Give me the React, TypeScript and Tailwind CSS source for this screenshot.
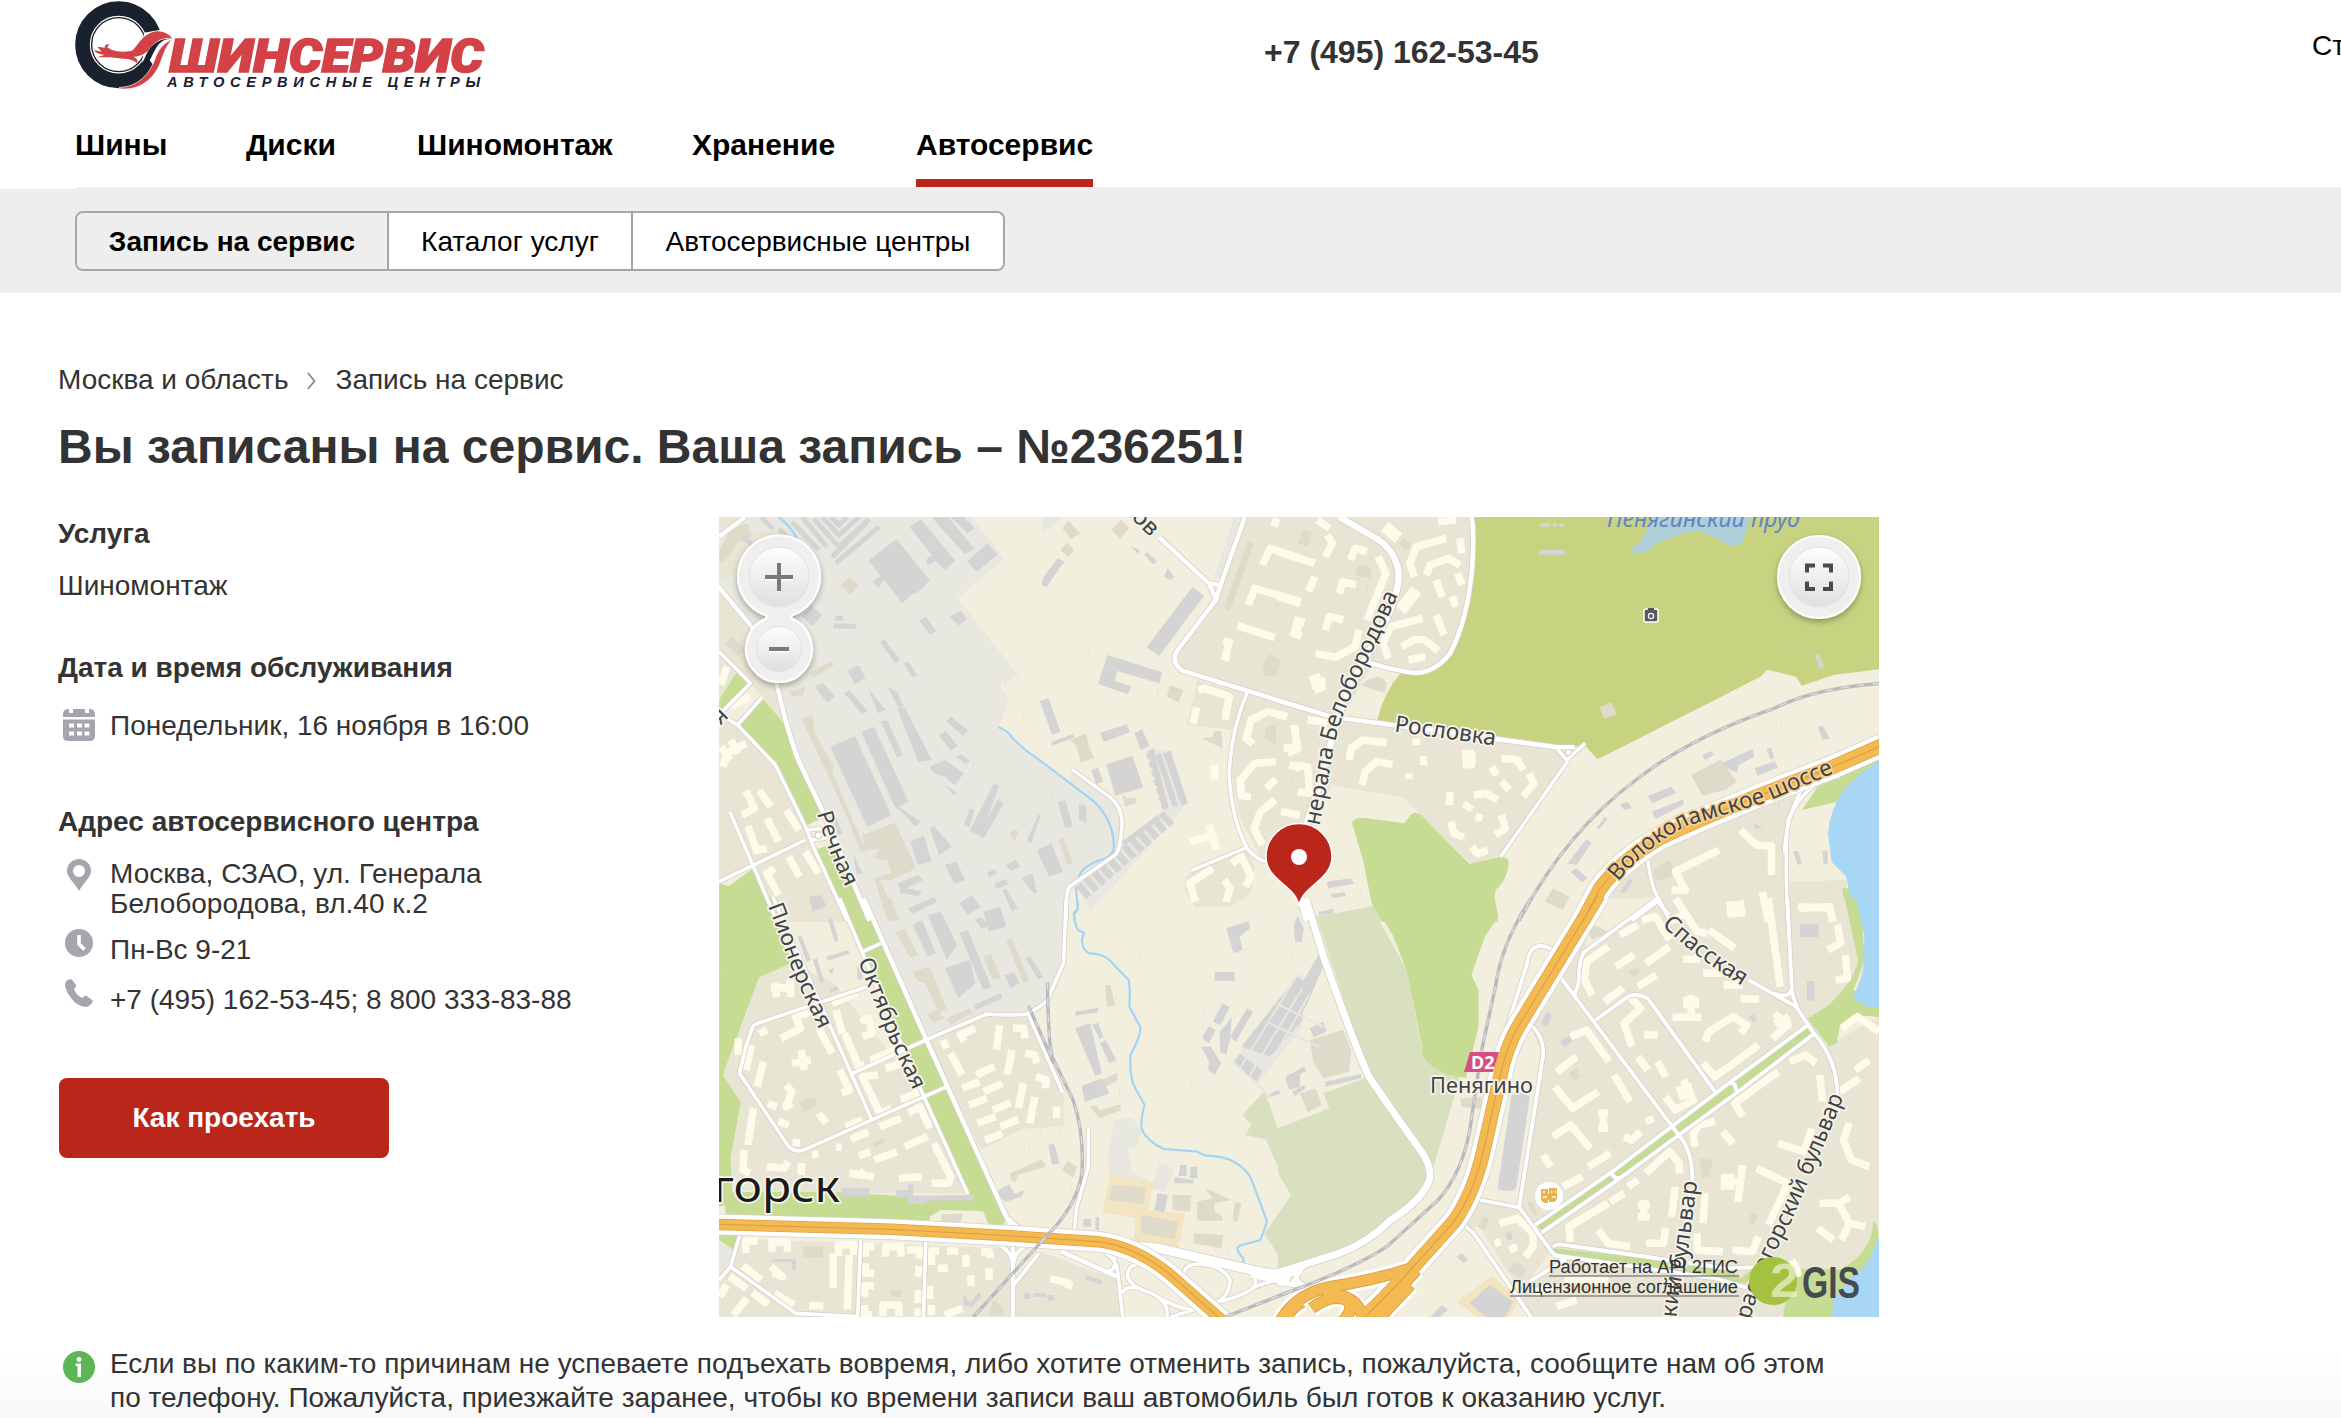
import React from "react";

/* ------------------------------------------------------------------ */
/* Map data: every tile has its own local grid                          */
/* ------------------------------------------------------------------ */

type TileId = "nw" | "ne" | "sw" | "se";

const tileTransform: Record<TileId, string> = {
  nw: "translate(-19 -17) scale(0.38265 0.33333)",
  ne: "translate(561 -17) scale(0.39541 0.33333)",
  sw: "translate(-19 383) scale(0.38265 0.33333)",
  se: "translate(561 383) scale(0.39541 0.33333)",
};

type Shape = { t: TileId; d: string; c: string };
type Line = { t: TileId; d: string; w: number };

const BLOCK = "#e8e5d4";
const INDUSTRY = "#e8e8e1";
const GREEN = "#c5dc92";
const PALE = "#d9e0c0";
const WATER = "#a8d6f5";

const areas: Shape[] = [
  { t: "nw", c: INDUSTRY, d: "M50 51H708L795 175L673 294L833 528L782 553L806 607L780 682L960 845L975 812L1085 905L1103 970L1085 1060L960 1165L955 1265H443L305 900L255 760L200 550L135 380L50 262Z" },
  { t: "nw", c: BLOCK, d: "M50 51H118L50 110Z M50 140L120 90L215 100L200 150L60 240L50 235Z" },
  { t: "nw", c: BLOCK, d: "M50 262L135 380L200 550L235 690L165 595L132 550L50 455Z" },
  { t: "nw", c: BLOCK, d: "M50 640L98 675L197 795L275 978L303 1050L385 1265H200L140 1105L50 1145Z M50 455L132 550L98 513L50 600Z" },
  { t: "nw", c: BLOCK, d: "M1425 51H1570V625L1250 512L1238 470L1350 300Z" },
  { t: "nw", c: BLOCK, d: "M1300 540L1570 628V1085H1470L1410 950L1385 800L1400 690L1272 675Z" },
  { t: "nw", c: BLOCK, d: "M1270 1130L1300 1095L1430 1045L1450 1100L1440 1180L1390 1218L1295 1222L1266 1170Z" },
  { t: "nw", c: INDUSTRY, d: "M895 51H945L895 100Z M1395 51H1420L1360 235H1343Z M1180 745L1228 752L1272 912L1080 1160L1020 1235L985 1160L1100 1050L1215 930Z" },
  { t: "ne", c: BLOCK, d: "M-5 51H485L488 200Q480 350 420 460Q380 530 305 518L230 495L160 650L-5 603Z" },
  { t: "ne", c: BLOCK, d: "M-5 610L160 655L725 745L720 780L558 1070L485 1092L310 892L130 855L80 970H-5Z" },
  { t: "ne", c: "#c8d382", d: "M485 51H1515V508L1400 525L1320 557L1305 530L1232 509L1215 530L850 750L803 778L770 735L745 740L246 660Q262 580 305 520Q380 535 420 460Q480 350 488 200Z" },
  { t: "ne", c: "#aecfd8", d: "M940 51Q920 130 888 145Q886 165 930 155Q960 118 985 118Q1030 90 1065 97Q1100 110 1130 133Q1160 145 1172 120L1190 51Z" },
  { t: "ne", c: GREEN, d: "M182 968Q186 952 215 954L315 970L330 945Q340 933 355 943L480 1092L560 1070Q580 1072 578 1092Q575 1140 545 1170L540 1215L552 1265H257L232 1210L210 1080Z" },
  { t: "ne", c: PALE, d: "M90 1252L235 1218L260 1265H90Z" },
  { t: "ne", c: BLOCK, d: "M750 1265L860 1130Q1000 1010 1310 870Q1272 970 1283 1265Z M1283 1145L1432 1140L1440 1265H1283Z" },
  { t: "ne", c: GREEN, d: "M1515 775V800Q1440 850 1410 905L1320 930L1360 860Z M1422 1165L1438 1165L1458 1265H1435Z" },
  { t: "ne", c: WATER, d: "M1515 785Q1395 860 1386 1000L1395 1085L1432 1130L1440 1180L1458 1265H1515Z" },

  { t: "sw", c: GREEN, d: "M50 -10H185L240 190L155 232L110 370L60 525L107 607L80 775L85 880L68 948H50Z" },
  { t: "nw", c: GREEN, d: "M50 600L98 513L132 550L62 625L50 628Z M98 675L162 592L212 660L232 700L255 780L320 930L318 955L275 978L197 795Z M300 1050L345 1032L445 1262H385Z M50 1150L75 1158L140 1105L202 1262H50Z" },
  { t: "sw", c: BLOCK, d: "M350 250L590 590L700 880L370 880L85 872L80 775L107 607L60 525L110 370L155 232L240 190Z" },
  { t: "sw", c: GREEN, d: "M360 -5H428L590 415L802 950L790 982L68 948L60 876L350 876L715 900L700 880L585 590Z" },
  { t: "sw", c: "#f2efde", d: "M600 972V950L628 930L740 933L755 978Z M50 920L65 915L68 948H50Z" },
  { t: "sw", c: INDUSTRY, d: "M428 -5H955L950 190L912 295L855 342L750 345L590 415Z" },
  { t: "sw", c: BLOCK, d: "M595 422L750 345H855L950 578V678L840 687L735 750Z" },
  { t: "sw", c: BLOCK, d: "M50 1015L815 1045V1251H50Z M825 1160L890 1055L1090 1140L1105 1251H825Z" },
  { t: "sw", c: INDUSTRY, d: "M1065 760L1085 660L1130 652L1155 697L1140 740L1118 750L1130 820L1185 848L1200 790L1240 805L1215 875L1070 825Z M1500 330L1555 225H1575V380L1458 550L1390 490Z M50 1020L85 1045L80 1100L50 1140Z" },
  { t: "sw", c: "#f3e4c2", d: "M1072 822L1185 850L1172 930L1267 940L1250 1047L1133 1020L1138 955L1052 935Z" },
  { t: "sw", c: PALE, d: "M1475 572L1510 685L1575 662V1102L1535 1105L1475 1003L1545 885L1478 718L1425 705L1440 675L1418 645Z" },
  { t: "sw", c: GREEN, d: "M50 1005L105 1003L88 1050L50 1020Z" },
  { t: "se", c: PALE, d: "M92 50L232 20L320 210L360 450L375 490L455 530L385 815Q345 730 230 550Z M215 535L110 580L125 625L-5 685V820L28 885L-5 955V1105L180 1040L360 890L385 830L350 740Z" },
  { t: "se", c: GREEN, d: "M228 -5H543L552 50L518 110L484 225L502 270V380L470 535L420 522Q355 490 360 440L320 210L285 105Z" },
  { t: "se", c: BLOCK, d: "M820 -5H1440L1480 200L1440 290L1340 350L1380 440L1515 350V1000L1400 1150L1260 1251H640L470 980L505 900L605 920L660 450L630 370L700 220Z" },
  { t: "se", c: "#f2efde", d: "M475 990L605 920L690 1060L720 1080L600 1170Z M445 1130H600L630 1251H445Z M735 -5H955L765 170L790 60Z" },
  { t: "se", c: BLOCK, d: "M505 905L605 925L685 1055L630 1140H590L515 1000Z" },
  { t: "se", c: "#f3e4c2", d: "M535 1128L607 1195L580 1251H500L447 1205Z" },
  { t: "se", c: GREEN, d: "M1428 -5L1462 180Q1455 240 1385 318L1335 355L1388 440L1408 430L1415 385Q1450 335 1515 352V310L1450 270L1478 180L1470 -5Z" },
  { t: "se", c: WATER, d: "M1455 -5H1515V322Q1470 325 1448 290Q1485 210 1475 160L1478 110L1470 60Z M1515 1010Q1485 1090 1450 1120L1395 1195V1251H1515Z" },
  { t: "se", c: GREEN, d: "M1500 965Q1515 970 1512 1015Q1490 1100 1450 1125L1400 1195L1395 1251H1272L1280 1190L1160 1140L1195 1108H1420Q1500 1050 1500 965Z" },
  { t: "se", c: GREEN, d: "M1330 383L1347 402L1160 572L1000 705L860 832L662 992L648 975L840 818L1130 550Z M690 1045L1130 1100L1180 1150L940 1110L700 1068Z" },
];

const greyBuildings: Shape[] = [
  { t: "nw", c: "", d: "M440 182L513 117L602 243L570 275L552 285L528 309L480 238L467 266L452 244L472 228Z M548 82L577 57L667 182L640 209L615 182L596 198L590 180L606 165Z M605 51H648L717 146L692 163Z M655 51H690L718 85L700 100Z M698 183L752 130L777 165L723 215Z" },
  { t: "nw", c: "", d: "M1040 552L1065 465L1208 517L1200 550L1090 513L1085 543L1127 560L1118 583Z M1167 442L1287 260L1317 287L1200 468Z M340 740L405 708L500 945L437 980Z M422 697L455 680L545 905L520 920L577 965L562 980L540 950L508 918Z" },
  { t: "nw", c: "", d: "M472 662L490 662L530 765L515 773Z M490 560L515 575L532 620L518 622Z M515 625L535 622L606 780L570 785Z M376 580L390 570L438 632L425 643Z M300 560L322 548L352 590L333 608Z M385 512L415 495L433 535L405 553Z M437 562L485 630L465 640Z M470 427L482 418L523 480L510 490Z M532 490L545 487L567 525L555 532Z" },
  { t: "nw", c: "", d: "M573 362L590 350L617 392L602 405Z M652 350L680 332L698 355L678 377Z M350 370L407 372V387L348 385Z M353 347H373V362H353Z M265 350L290 318L320 345L295 378Z M624 705L643 693L673 738L655 752Z M645 665L655 650L700 690L688 708Z M600 800L640 780L690 820L665 855L640 830L610 820Z M670 770L680 762L705 782L695 792Z" },
  { t: "nw", c: "", d: "M705 992L768 850L783 858L748 960L780 895L793 912L742 1015Z M690 975L705 925L717 930L705 982Z M549 1025L585 1007L605 1085L570 1095Z M600 985L612 978L658 1040L625 1065Z M640 1095L670 1085L693 1140L665 1152Z M880 1050L918 1030L948 1115L912 1130Z M517 1150L570 1125L583 1140L540 1165L580 1175L570 1188L525 1180Z M545 1225L613 1192L618 1205L552 1240Z M678 1210L712 1185L733 1222L700 1245Z" },
  { t: "nw", c: "", d: "M888 603L911 594L942 695L920 705Z M918 727L973 703L980 712L920 737Z M1046 698L1115 673L1123 697L1055 726Z M1062 793L1130 767L1158 862L1085 887Z M1135 700L1155 688L1175 738L1152 750Z M1023 810L1040 803L1054 845L1035 853Z M1210 760L1230 752L1275 910L1258 918Z M1190 765L1205 760L1250 918L1235 920Z M1170 752L1185 745L1225 925L1210 930Z" },
  { t: "nw", c: "", d: "M895 235L935 175L952 185L905 262L893 255Z M1125 138L1150 150L1145 162Z M1160 162L1170 158L1195 185L1183 193Z M1213 230L1222 205L1240 230L1230 240Z M935 905L955 900L975 980L955 985Z M990 912L1010 918V970L990 960Z M285 1190L315 1185L330 1215L300 1230Z M800 1095L825 1080L838 1100L812 1113Z M750 1118L770 1108L775 1122L755 1132Z M770 1150L800 1138L805 1152L775 1168Z" },
  { t: "nw", c: "", d: "M855 1020L885 943L890 948L865 1030Z M400 1060L420 1110L428 1120L410 1125Z M340 955L355 950L372 1000L360 1008Z M790 1170L800 1165L830 1225L815 1235Z M840 1135L870 1120L880 1180L868 1175Z M640 855L670 878L662 884Z" },
  { t: "ne", c: "", d: "M655 150H720V164H655Z M658 69H683V80H658Z M690 69H701V80H690Z M706 69H718V80H706Z M1117 790L1195 747L1200 770L1160 795L1155 818L1140 810Z M1200 805L1250 784L1260 802L1208 827Z M930 888L990 860L1002 878L942 910Z M940 935L1020 898V915L950 957Z M727 1090L775 1018L788 1028L750 1095Z M860 912L880 905L890 925L870 930Z" },
  { t: "ne", c: "", d: "M1353 465L1362 460L1377 500L1365 508Z M1068 765L1090 753L1097 765L1075 780Z M1230 745L1243 745L1250 775L1240 777Z M1360 682L1372 676L1390 715L1373 720Z M1195 970L1220 980L1205 990Z M1298 1055L1310 1052L1320 1090L1310 1095Z M1372 1052H1385V1092H1375Z M118 1145L180 1135L187 1152L122 1165Z M128 1182L163 1177L167 1188L132 1193Z M98 1235L135 1228V1240L100 1245Z M735 1115L750 1105L778 1135L765 1147Z M800 985L822 950L828 957L808 988Z M860 1175L885 1135L893 1142L872 1180Z" },
  { t: "sw", c: "", d: "M640 205L705 180L720 250L675 295Z M595 45L630 35L672 135L645 180Z M555 75L580 60L617 160L595 170Z M678 100L700 90L762 262L740 270Z M740 35L785 20L800 80L755 95Z M715 315L785 280L790 295L720 330Z M795 225L820 215L835 250L812 265Z M720 60L735 50L755 80L735 85Z M850 175L865 170L897 230L885 240Z M547 25L610 -5L620 5L558 40Z" },
  { t: "sw", c: "", d: "M285 -5H320L325 20L295 35Z M330 170L388 150L390 160L335 182Z M335 210L350 205L345 225Z M295 180L305 175L325 245L315 250Z M255 110L265 105L290 180L278 185Z M335 60L345 55L362 120L352 125Z M338 268L358 258L362 268L342 278Z M410 200L425 195V240L412 238Z" },
  { t: "sw", c: "", d: "M980 385L1020 370L1050 520L1033 527Z M1025 375L1040 368L1055 410L1045 418Z M1045 430L1060 420L1088 480L1070 490Z M998 558L1050 535L1070 580L1005 607Z M980 335L1040 323V337L982 347Z M1345 217H1397V243H1345Z M1375 85L1435 63L1437 85L1410 110L1418 150L1395 160Z M1310 440L1335 440L1362 490L1345 525L1328 510L1330 485Z M1340 365L1365 310L1385 322L1360 375Z M1312 415L1330 378L1347 390L1330 430Z M1358 395L1370 380L1390 350L1385 420L1375 465L1360 455Z M1385 410L1430 325L1445 335L1400 425Z" },
  { t: "sw", c: "", d: "M1395 490L1410 460L1470 512L1455 545Z M1415 440L1490 330L1560 230L1575 240V360L1490 470Z M780 870L808 853L823 882L850 870L840 890L800 905L785 895Z M513 870H543V853H557V887L715 885V902H592L590 912H545L543 893H513Z M370 863H442V890H370Z M1195 880L1223 885L1213 938L1188 930Z M1002 957H1022V980H1002Z M1033 952H1043V990H1033Z M687 1180L705 1210L730 1175L735 1190L710 1222L690 1215Z M847 1180H865V1197H847Z M870 1180H903V1190H870Z M908 1185H925V1202H908Z M1010 1125L1052 1142L1048 1155L1008 1138Z M190 1078H250V1110H240V1085H190Z M1255 795H1272V828H1250Z M1282 800H1300V835H1280Z M1240 832L1290 840V850H1240Z M910 735L925 730L940 790L920 795Z M1480 585L1515 570V582L1485 593Z M1530 535L1568 515V560L1540 570Z" },
  { t: "se", c: "", d: "M585 585Q608 570 632 590L598 860Q595 880 550 868Z M-5 430L50 260L100 160L118 175L70 310L35 385L-5 445Z M75 385L110 365L118 395L85 412Z M15 530L60 500L67 512L20 540Z M30 575L60 555L65 565L38 588Z M112 545L205 522V535L115 560Z M35 75L45 45L60 85L55 125H38Z M97 38L135 25V38L100 47Z M1315 72H1362V112H1315Z M1333 243H1352V302H1333Z M708 425L730 408L740 422L720 440Z M660 372L675 335L688 345L675 380Z M447 1070L460 1060L475 1080L465 1090Z M380 1251L410 1215L425 1230L405 1251Z M1185 350L1195 342L1207 358L1197 368Z M570 1000L585 995L587 1020H575Z M480 1210L530 1155L590 1205L570 1251H520Z" },
];

const beigeBuildings: Shape[] = [
  { t: "nw", c: "", d: "M367 257L390 230L415 255L393 285Z M285 520L345 482L350 495L295 533Z M265 655L295 645L300 700L350 800L345 815L425 1030L440 1050L420 1055L380 940Z M423 1005L510 968L565 1105L500 1140L470 1140L520 1262H490L455 1135L500 1120L490 1080L455 1075L470 1045L435 1050Z M1075 90L1100 60L1122 85L1098 115Z M947 85L962 62L993 100L970 118Z M942 150L960 127L978 150L962 170Z M968 720L1010 700L1015 735L1030 775L995 787L985 740Z M1228 555L1263 570L1250 608L1220 590Z M1430 125L1448 130L1385 332L1370 325Z M1310 715L1340 710L1345 693H1362L1365 745Z M235 575L275 560L270 585L240 590Z" },
  { t: "nw", c: "", d: "M80 90L125 70L135 110L100 125L60 190L50 180V150Z M65 430L85 410L120 450L100 470Z M1470 490L1490 462L1518 480L1505 530L1475 525Z M937 1020L950 1013L975 1090L960 1095Z M1105 882L1115 895L1138 893L1142 908L1110 920Z M810 1000L822 988L833 995L822 1025Z M1475 710L1480 680L1505 675V735Z" },
  { t: "ne", c: "", d: "M1040 825L1115 778L1155 845L1125 870L1068 887Z M808 622L838 607L852 642L820 657Z M45 130L60 88L80 95L70 140Z M190 225L200 195L232 205L228 235Z M205 555Q250 510 270 550L265 580Z M945 1110L985 1078L1003 1125L950 1145Z M670 1205L690 1165L732 1190L715 1230Z M300 130L315 115L330 140L318 155Z" },
  { t: "sw", c: "", d: "M555 215L600 200L645 325L625 340L640 355L610 370L595 345L620 330L590 250L570 245Z M510 95L535 85L570 165L550 175Z M645 355L705 325L712 340L655 375Z M800 120L815 115L860 240L845 250Z M740 170L760 160L785 235L765 240Z M480 -5H500L520 60L508 65Z M1050 540L1090 518L1092 540L1060 560Z M1018 620L1035 615L1045 630L1100 612V630L1045 655Z M1075 855L1165 862L1160 912L1070 900Z M1150 945L1250 965L1240 1018L1155 1000Z M1235 885L1285 885L1280 935L1235 930Z M1320 865L1390 900L1345 910V935L1365 950V962H1300L1298 905L1340 895Z" },
  { t: "sw", c: "", d: "M1290 1000L1368 1005L1362 1045L1290 1030Z M1398 905L1415 910L1405 965L1392 960Z M630 942H688L680 972H632Z M270 1040H322V1073H268Z M810 820L893 778L905 800L830 825L825 847L812 840Z M1058 255L1072 255L1085 315L1065 320Z M260 605L300 590L305 615L268 637Z M765 1200L795 1225L790 1245L755 1248Z M450 730L480 715V728L455 742Z M498 1170H527V1190H498Z M945 810L960 783L985 800L975 835Z" },
  { t: "se", c: "", d: "M75 420L160 390L180 450L175 515L110 535L85 490Z M50 580L90 565L105 615L70 637Z M455 595L510 590L515 630L460 620Z M1060 775L1095 780L1085 835L1070 830Z M500 980L515 948L530 958L515 992Z M730 520L750 505L760 530L745 545Z M625 910L638 905L650 940L642 948Z M780 100L795 75L830 95L790 120Z M575 1110L600 1085L625 1110L610 1135Z M880 215L900 203L912 215L895 233Z M1185 970L1190 940L1210 945L1200 975Z" },
];

const creamBuildings: Line[] = [
  { t: "nw", w: 7.5, d: "M1470 195L1490 145L1570 175 M1433 315L1450 265L1570 305 M1405 377L1502 413 M1368 422L1392 430M1382 430L1372 475M1362 468L1385 475 M1302 572L1320 565L1383 590L1372 660 M1298 622L1288 672 M1445 733L1428 715L1440 660L1485 635L1535 650 M1440 890L1415 888L1412 840L1450 790L1505 785 M1470 1035L1448 985L1465 935L1503 900 M1350 1050L1330 975M1280 1025L1330 1010 M1295 1205L1280 1150L1340 1105M1390 1090L1415 1070L1440 1130L1425 1160M1370 1140L1385 1165L1375 1205 M1500 80L1508 55 M1550 410L1562 360 M1525 745L1560 740L1555 680 M1480 865L1505 838 M1518 935L1568 945 M1345 795V838 M1540 795L1568 805" },
  { t: "nw", w: 7.5, d: "M78 620L130 590 M55 555L70 500 M60 800L70 760L120 730M80 720L100 760M55 740L80 780 M110 945L142 925L120 872 M155 872L185 920 M175 955L205 1025 M225 930L258 990 M125 978L148 1052L175 1045 M232 1070L260 1130 M275 1055L310 1120 M195 1105L175 1120L205 1185" },
  { t: "ne", w: 7.5, d: "M-5 155L88 190 M-5 290L52 310 M88 230L72 275 M120 105L132 130L115 170M95 60L125 85 M178 180L190 145L220 155 M150 280L158 245L192 255 M115 390L125 350L160 360 M248 170L268 220L220 360 M340 230L328 190L345 140L420 115 M370 225L380 195L425 175L455 195 M455 115L460 160 M275 475L260 430L280 380L360 355 M308 440L340 418L365 420L400 452 M325 480L368 470 M35 360L62 368M50 365L40 410M32 400L55 408 M90 460L140 472L190 440L200 390 M395 240L410 290 M435 290L445 320 M395 345L415 405 M450 220L460 255 M400 65L445 60" },
  { t: "ne", w: 12, d: "M265 80L300 115 M345 270L305 330 M85 525L105 575M80 550H115 M475 750L478 805M462 775H495" },
  { t: "ne", w: 7.5, d: "M-5 645L15 650M35 675L45 745L20 760 M175 780L180 745L210 720L270 728 M208 855L215 815L245 785L285 793 M70 660L110 665V700 M345 715V735 M363 768V795 M326 820V838 M25 795L70 800L75 880L45 875 M430 875L428 915 M465 910L485 930 M490 885L520 880L550 900 M495 950L512 955 M535 800L548 825 M560 775L600 780L615 810 M560 845L580 870 M630 820L642 850L615 890 M432 965L440 1000L465 1012 M485 1040L500 1062L525 1050 M560 945L570 985L545 1005 M1165 990L1205 1035L1243 1038V1125 M985 1265L1020 1245M990 1170L1025 1170L1000 1115L1110 1050 M1220 1175L1235 1265 M1315 1225L1390 1220L1398 1265" },
  { t: "sw", w: 7.5, d: "M185 262L240 265M200 290L195 250M235 240L238 290 M212 415L262 385L250 350L290 335 M155 402L175 390 M100 415V465 M135 435L120 510 M165 485L150 560 M310 385L345 460 M355 330L372 400 M378 400L415 500L430 495 M345 310L410 280 M420 365L440 355L450 400L425 410 M445 480L510 450 M365 510L390 570L370 580 M240 490L290 480M265 450L272 510 M225 555L240 575L225 620L240 610 M178 610L200 620 M465 525L425 530L470 640L500 625 M485 505L530 490 M310 640L330 670 M205 665L232 675 M140 625L125 735 M115 750L112 810L130 820 M175 800L220 805L230 785 M265 790V825 M242 728H262 M355 742H370 M293 763H310" },
  { t: "sw", w: 7.5, d: "M380 680L425 660 M395 718L440 695 M415 768L445 755 M455 780L515 755 M470 680L525 655 M535 740L595 710 M545 640L575 620L600 685 M612 730L655 830L650 850L605 850 M390 820L455 830M420 825L430 810 M520 835L580 830 M690 425L680 405L720 385 M635 420L645 445 M655 460L685 525 M722 525L770 500 M685 565L730 545 M742 575L790 550 M703 615L750 595 M765 630L812 608 M725 670L772 650 M785 680L832 658 M745 720L790 700 M783 375L775 450 M815 450L803 525 M845 550L832 625 M875 590L862 670 M818 385L845 385L850 415 M850 460L875 465L880 490 M878 530L905 540L903 565 M932 620V655 M525 600L575 575" },
  { t: "sw", w: 7.5, d: "M120 1060V1023H150 M188 1055V1027H228V1055 M362 1068V1035H402V1065 M455 1040H432V1070 M485 1070V1040H525V1070 M540 1050H575V1078 M625 1053H605V1095 M645 1053H675 M735 1055H757V1075 M348 1060V1165 M390 1065L385 1228 M432 1090V1120H455 M572 1098V1130 M455 1157H430V1190 M600 1158V1197 M570 1170V1210 M430 1215V1245H450 M478 1248V1215H520V1248 M570 1225V1248 M605 1245V1215 M112 1097L160 1140 M78 1130L122 1165 M137 1178L178 1213 M122 1195L88 1245 M185 1100L215 1130L190 1120 M195 1180L245 1215 M285 1217H322 M622 1105H648M635 1095V1115 M695 1065V1100 M755 1105V1140 M708 1125V1158 M640 1245L685 1225 M915 1135L965 1150L960 1165 M52 1190L70 1155" },
  { t: "se", w: 7.5, d: "M860 105L905 75 M915 60L950 50L985 120 M925 190L985 140 M850 200L895 165 M905 260L952 225 M820 305L868 265 M790 285L770 240L775 185L830 140 M1020 178H1062 M1070 220H1118 M1122 255H1170 M1165 297H1212 M1040 285V340M993 352H1065 M1235 -5L1265 260 M1000 -5L1055 95L1080 100M1085 90L1150 145 M885 290L912 325L870 370L890 440 M920 405H955 M905 470L930 510 M955 485L975 530 M1075 425L1085 395L1145 350L1180 375L1165 400 M1250 340L1285 375L1245 415 M1070 490L1100 530L1210 435 M735 410L775 390L832 485" },
  { t: "se", w: 7.5, d: "M700 515L750 470 M695 560L740 625L805 575 M845 525L885 605 M818 635V690M805 640H830M805 685H830 M665 765L685 800 M690 710L735 675L785 745 M780 800L835 760 M925 665L945 655 M870 710L890 720L912 695 M975 590L1000 630L1045 600L1020 540 M1050 740L1045 700L1060 675L1100 665 M1120 695L1145 730 M1260 730L1325 755L1345 685 M1290 485L1330 465L1355 490 M1365 525L1372 605 M1170 650L1150 610L1260 515 M1455 510L1490 480 M1415 575L1465 535 M1440 670L1425 720L1445 780L1490 800 M1420 385L1460 350L1515 395 M715 860L765 830 M735 1025L730 980L830 910 M835 905L870 880 M880 860L905 840 M925 820L985 755L1010 790V820 M920 900V960M905 915H935M905 950H935" },
  { t: "se", w: 7.5, d: "M805 990L830 1030L885 1040 M925 1030H970L975 985 M1000 860L990 950 M1075 880L1070 970 M1170 795L1158 905M1115 845H1165 M1205 805L1285 850L1235 975 M1055 1000V1050L1120 1055 M1210 1010L1195 1055L1145 1050 M1365 910H1415L1440 890M1415 915L1440 970L1480 980M1440 970L1420 1020 M1360 985L1400 1020 M1240 1125L1310 1120L1295 1080 M555 970L600 955L640 1000V1040L620 1070 M543 1030L558 1025 M580 1050L600 1040 M1310 20L1395 25 M1410 75L1418 130L1385 150 M1430 165L1435 235L1405 240 M640 1180L690 1160 M720 1140H830 M700 1220L750 1200" },
  { t: "se", w: 16, d: "M1040 290V325 M1130 30L1175 25M1150 5L1160 45 M1115 845H1150 M1265 350L1275 375 M1020 555L1030 595" },
];

/* Ordinary streets: grey casing below, white on top */
const streets: Line[] = [
  { t: "nw", w: 4.5, d: "M50 262L135 380L200 550Q225 680 255 775L315 920L443 1262 M50 110L118 51" },
  { t: "nw", w: 3.6, d: "M50 455L132 550L50 645 M50 640L98 675L197 795L275 978L300 1050L385 1262 M98 675L162 592 M78 935L140 1100L200 1262 M50 1145L275 1020 M275 990L330 985M285 1020L330 1015" },
  { t: "nw", w: 3.6, d: "M972 808L1070 890Q1103 920 1103 970Q1100 1050 1085 1065L965 1160Q957 1170 957 1262 M1430 578Q1385 700 1383 830Q1390 960 1430 1045Q1455 1080 1480 1085 M1283 1112L1430 1042" },
  { t: "nw", w: 4.5, d: "M1200 112L1330 250L1350 300 M1424 51L1365 240L1348 300L1245 455Q1232 490 1260 512L1570 622 M1330 250L1360 255" },
  { t: "ne", w: 6.5, d: "M150 51L250 120Q300 165 300 230Q298 300 250 400L160 600L100 850L60 1000L48 1180L68 1262" },
  { t: "ne", w: 4.5, d: "M484 51Q492 90 486 200Q475 360 430 460Q390 520 340 518Q300 515 215 485 M-5 602L130 650L700 742L745 742" },
  { t: "ne", w: 3.4, d: "M772 730L725 780L700 745 M730 780L558 1070 M1415 830Q1330 840 1285 960Q1275 1080 1285 1262 M1318 870Q1278 960 1276 1060 M930 1080Q940 1170 960 1200L985 1262 M960 1200L890 1262" },
  { t: "sw", w: 4.5, d: "M428 -5L590 415L800 950 M818 1000V1251 M945 1055L1090 1130" },
  { t: "sw", w: 3.6, d: "M190 -10L450 662 M365 -5L425 160L585 590L700 882 M422 157L472 130 M450 255L150 370Q138 375 136 385L120 440L103 520L232 740Q250 760 275 748L645 560 M395 522L590 420L750 342Q800 347 850 343Q915 310 915 280L950 190L957 -5 M857 340L948 578 M1015 685V800L985 920L977 1000" },
  { t: "sw", w: 3.6, d: "M105 1000L80 1100L50 1140 M80 1100L250 1240L410 1250 M420 1015L412 1251 M590 1020L584 1251 M885 1060L820 1155 M800 950L820 1000L780 985 M800 950L850 1000L830 995 M780 1035Q815 1050 818 1100Q820 1050 860 1035" },
  { t: "sw", w: 3.6, d: "M1060 1060Q1090 1075 1092 1120L1105 1251 M1060 1115Q1090 1115 1082 1070 M1160 1090Q1115 1090 1118 1130Q1125 1160 1180 1180Q1240 1225 1290 1230 M1105 1180Q1110 1155 1150 1165 M1220 1251Q1225 1215 1200 1195 M1265 1130Q1260 1090 1310 1092Q1370 1100 1385 1140Q1385 1190 1345 1210L1230 1251 M1340 1210Q1420 1190 1450 1160L1570 1115 M1450 1160Q1455 1130 1440 1115" },
  { t: "sw", w: 9, d: "M1100 1035L1200 1045L1440 1110Q1510 1130 1570 1110 M1440 1120L1540 1145" },
  { t: "se", w: 7, d: "M65 -5L110 170Q190 440 225 530Q300 660 355 750Q385 800 378 840Q360 900 280 960Q220 1030 150 1060L-5 1118" },
  { t: "se", w: 3.8, d: "M60 1100L30 1150L150 1172 M45 1110Q35 1140 60 1155L140 1165 M-5 1150L180 1175 M695 155Q670 130 645 142Q630 150 625 190L575 380L545 520 M630 370Q670 410 665 470L605 920 M505 900L605 922L690 1060L720 1080L630 1145 M460 970L490 1000L635 1251" },
  { t: "se", w: 3.8, d: "M705 225L1005 700Q1045 750 1043 850 M955 -5L770 155Q755 180 755 250L745 285 M798 360L880 290Q900 278 930 295L1100 575 M955 5L985 45 M1185 240L1305 320L1350 400Q1410 480 1410 590 M1283 -5L1295 280L1310 330 M1250 280Q1290 300 1295 260" },
  { t: "se", w: 3.8, d: "M645 975L840 815L1135 550L1335 375 M662 998L860 835L1165 570L1350 402 M838 818Q845 840 862 832 M1135 550Q1155 545 1152 572 M690 1040Q700 1030 720 1035L1130 1105L1240 1100 M690 1065L1100 1135L1200 1170" },
];

const highway: Line[] = [
  { t: "sw", w: 10, d: "M40 973L500 988L820 1008L1040 1025Q1140 1040 1230 1125L1365 1262" },
  { t: "ne", w: 13, d: "M1525 735L1400 800Q1100 935 960 1015Q860 1085 810 1165L765 1265" },
  { t: "se", w: 13, d: "M805 -15L700 190L610 365Q570 440 555 540L515 750Q490 880 440 965L330 1110Q270 1190 205 1262" },
];

const ramps: { t: TileId; d: string }[] = [
  { t: "se", d: "M330 1105Q240 1140 130 1160Q40 1180 0 1265 M345 1110L240 1250 M330 1155L245 1262 M80 1225Q130 1180 170 1200Q190 1225 160 1262 M110 1180Q200 1180 210 1262" },
  { t: "sw", d: "M1530 1262Q1545 1220 1575 1205" },
];

const rails: { t: TileId; d: string }[] = [
  { t: "ne", d: "M1520 550Q1350 565 1250 625Q1040 710 900 840Q720 1000 605 1262" },
  { t: "se", d: "M635 -5Q560 130 545 260L510 450L480 690Q460 820 400 900L270 1040Q180 1110 -5 1188" },
  { t: "sw", d: "M908 247Q910 420 920 470L975 600Q1005 700 998 820Q985 920 900 1015L715 1250 M858 317L925 490 M1375 1250L1570 1162" },
];

const rivers: Line[] = [
  { t: "nw", w: 2.2, d: "M205 51Q235 75 255 118 M780 682Q800 690 810 705Q840 745 885 778L1030 905Q1080 960 1082 1040Q1080 1065 1060 1075Q1000 1095 990 1130 M982 1160L988 1225L977 1240L980 1262" },
  { t: "sw", w: 2.2, d: "M985 -5L988 28L977 42Q978 70 988 90L1003 98L998 120Q1000 155 1020 160Q1050 160 1070 180L1120 240Q1125 270 1122 320L1150 380Q1155 400 1125 465Q1122 540 1140 570L1162 615Q1150 660 1155 690Q1170 725 1212 747L1300 755L1320 767Q1370 768 1395 785Q1435 810 1445 850L1482 965L1465 1020L1410 1037Q1395 1045 1420 1075L1420 1098" },
];

const dots: Line[] = [
  { t: "nw", w: 6, d: "M358 305h1M328 262h1M560 325h1M597 590h1M831 535h1M797 550h1M797 587h1M844 642h1M1015 451h1M1038 470h1M1195 579h1M912 108h1M1332 204h1M966 210h1M850 920h1M598 852h1M620 745h1M610 800h1M712 792h1M1148 948h1M1065 1005h1M1040 1030h1M1173 898h1M920 885h1M1330 1150h1M1332 650h1M1508 678h1M1506 320h1M985 1040h1M1020 1070h1" },
  { t: "ne", w: 6, d: "M1036 320h1M220 262h1M155 405h1M338 237h1M305 730h1M28 840h1M582 915h1M1268 668h1M882 998h1M285 545h1M1260 918h1M1300 425h1M1285 430h1M202 1178h1M1035 1130h1M560 700h1M574 702h1" },
  { t: "sw", w: 6, d: "M1150 160h1M174 470h1M340 585h1M575 440h1M790 755h1M860 738h1M890 690h1M938 690h1M1005 252h1M1085 295h1M1095 575h1M970 870h1M958 905h1M1318 345h1M1548 177h1M1283 550h1M1185 1015h1M1380 1055h1M575 785h1M705 490h1M62 215h1M1020 1175h1" },
  { t: "se", w: 5, d: "M853 155h1M960 120h1M1080 68h1M1197 87h1M895 250h1M945 480h1M838 377h1M785 553h1M722 712h1M845 737h1M1187 632h1M1300 715h1M1227 870h1M1085 1010h1M1408 760h1M1397 945h1M848 930h1M1328 152h1M1362 210h1M1482 547h1M700 370h1M675 417h1M960 955h1M437 1193h1" },
];

const labels = [
  { id: "beloborodova", text: "нерала Белобородова", d: "M600.5 309L611.6 250Q616 214 632 180Q646 150 662 116L681 74", len: 246, size: 23, glow: "#f6f4e8" },
  { id: "volokolamskoe", text: "Волоколамское шоссе", d: "M899 365Q928 329 968 309L1045 286L1120 254", len: 246, size: 23, glow: "#f6d294" },
  { id: "roslovka", text: "Рословка", d: "M675 214.5L780 229", len: 102, size: 23, glow: "#f6f4e8" },
  { id: "spasskaya", text: "Спасская", d: "M943 408Q975 440 1030 473", len: 101, size: 23, glow: "#f6f4e8" },
  { id: "rechnaya", text: "Речная", d: "M98 296Q108 335 130 376", len: 80, size: 22, glow: "#f6f4e8" },
  { id: "pionerskaya", text: "Пионерская", d: "M49 389L76 460L106 525", len: 134, size: 22, glow: "#f6f4e8" },
  { id: "oktyabrskaya", text: "Октябрьская", d: "M139 444L170 522L202 590", len: 141, size: 22, glow: "#f6f4e8" },
  { id: "kov", text: "ков", d: "M403 -8L440 29", len: 40, size: 23, glow: "#f6f4e8" },
  { id: "aya", text: "ая", d: "M-8 218L24 186", len: 26, size: 23, glow: "#f6f4e8" },
  { id: "krasnogorsky", text: "расногорский бульвар", d: "M1031 803Q1044 756 1073 703L1087 670Q1108 622 1127 574", len: 242, size: 23, glow: "#f6f4e8" },
  { id: "boulevard", text: "кий бульвар", d: "M957.6 801Q960 765 968 743L979 660", len: 138, size: 23, glow: "#f6f4e8" },
];

function Shapes({ items, fill }: { items: Shape[]; fill?: string }) {
  return (
    <>
      {items.map((s, i) => (
        <path key={i} transform={tileTransform[s.t]} d={s.d} fill={fill ?? s.c} />
      ))}
    </>
  );
}

function Lines({ items, color, extra = 0, cap = "butt", dash }: {
  items: { t: TileId; d: string; w?: number }[];
  color: string;
  extra?: number;
  cap?: "butt" | "round" | "square";
  dash?: string;
}) {
  return (
    <g fill="none" stroke={color} strokeLinejoin="round" strokeLinecap={cap} strokeDasharray={dash}>
      {items.map((l, i) => (
        <path key={i} transform={tileTransform[l.t]} d={l.d} strokeWidth={(l.w ?? 0) + extra} vectorEffect="non-scaling-stroke" />
      ))}
    </g>
  );
}

const highwayCore = highway.map(({ t, d }) => ({ t, d }));

const halo = { paintOrder: "stroke" as const, stroke: "#f6f4e8", strokeWidth: 3.5, strokeLinejoin: "round" as const };

function ServiceMap() {
  return (
    <svg className="block h-[800px] w-[1160px] shrink-0 overflow-hidden" viewBox="0 0 1160 800" fontFamily="'Noto Sans', 'Open Sans', sans-serif">
      <defs>
        <linearGradient id="knob" x1="0" y1="0" x2="0" y2="1">
          <stop offset="0" stopColor="#fdfdfd" />
          <stop offset="1" stopColor="#dfdfdf" />
        </linearGradient>
        <filter id="shade" x="-20%" y="-20%" width="140%" height="150%">
          <feDropShadow dx="0" dy="3" stdDeviation="3" floodColor="#000" floodOpacity="0.3" />
        </filter>
        {labels.map((l) => (
          <path key={l.id} id={l.id} d={l.d} />
        ))}
      </defs>

      <rect width="1160" height="800" fill="#f2efde" />
      <Shapes items={areas} />
      <Shapes items={beigeBuildings} fill="#dfdbcb" />
      <Shapes items={greyBuildings} fill="#d4d4d4" />
      <Lines items={dots} color="#d2d2d4" />
      <Lines items={creamBuildings} color="#fefbeb" />

      {/* long sheds and garage rows */}
      <g stroke="#d4d4d4" strokeWidth="5" fill="none">
        <path d="M73 5L100 33M83 0L108 30M95 2L120 30L150 2M103 0L120 18L140 0M112 0L120 8L128 0M113 40L148 5" />
        <path d="M117 46L160 10M60 12L72 24M42 0L54 12M24 20L36 30" />
        <path strokeDasharray="7 3" strokeWidth="16" d="M362 376L450 300" />
        <path strokeDasharray="6 3" strokeWidth="6" d="M430 236L446 292" />
        <path d="M404 327L440 300" />
      </g>
      <g stroke="#e8e8e1" strokeWidth="2" fill="none">
        <path d="M520 553L577 460M531 558L583 472M542 563L590 478M515 546L552 580M548 505L600 530M558 487L605 510" />
      </g>

      <Lines items={rivers} color="#a3d4f5" />
      <Lines items={streets} color="#d2d0c8" extra={1.6} />
      <Lines items={streets} color="#ffffff" />
      <Lines items={highway} color="#d5d3cb" extra={11.5} />
      <Lines items={highway} color="#ffffff" extra={10} />
      <Lines items={ramps} color="#ffffff" extra={18} />
      <Lines items={ramps} color="#dfa045" extra={12} />
      <Lines items={highway} color="#dfa045" extra={1.5} />
      <Lines items={highway} color="#f3ba52" />
      <Lines items={ramps} color="#f3ba52" extra={10} />
      <Lines items={highwayCore} color="#dfa045" extra={1.2} />
      <Lines items={rails} color="#b9babd" extra={3.4} />
      <Lines items={rails} color="#dcdcdc" extra={1.4} dash="8 8" />

      <circle cx="849.5" cy="235.5" r="3" fill="#fff" stroke="#cfcdb8" />
      <circle cx="99.5" cy="318.5" r="3.5" fill="#fff" stroke="#cfcdb8" />

      {/* place markers */}
      <g>
        <rect x="925" y="92" width="14" height="13" rx="2" fill="#55585c" stroke="#fff" strokeWidth="1.5" />
        <rect x="929" y="91" width="6" height="3" fill="#55585c" />
        <circle cx="932" cy="99" r="2.6" fill="none" stroke="#fff" strokeWidth="1.3" />
        <circle cx="830" cy="679" r="14" fill="#fff" />
        <path d="M822 672h7v5h2v6h-2v3h-2q-5 0-5-6zM830 671h8v9q0 5-5 5h-3z" fill="#eeb04a" />
        <path d="M824 675h2M824 680h4M832 675h1.500M836 675h1M833 680h3.500" stroke="#fff" strokeWidth="1.4" />
        <path d="M751 535H780L774 555H745Z" fill="#d5507f" />
        <text x="752" y="551.5" fontSize="18" fontWeight="700" fill="#fff">D2</text>
      </g>

      {/* street names */}
      <g fill="#404347">
        {labels.map((l) => (
          <text key={l.id} fontSize={l.size} {...halo} stroke={l.glow}>
            <textPath href={`#${l.id}`} textLength={l.len} lengthAdjust="spacingAndGlyphs">{l.text}</textPath>
          </text>
        ))}
        <text x="711" y="575.500" fontSize="22" textLength="103" lengthAdjust="spacingAndGlyphs" {...halo}>Пенягино</text>
        <text x="-6" y="685" fontSize="44" fill="#1a1a1a" textLength="127" lengthAdjust="spacingAndGlyphs" {...halo}>горск</text>
        <text x="888" y="10" fontSize="23" fontStyle="italic" fill="#6583c4" textLength="193" lengthAdjust="spacingAndGlyphs">Пенягинский пруд</text>
      </g>

      {/* destination pin */}
      <path d="M580 389C577 368 547 364 547 339.500A33 33 0 1 1 613 339.500C613 364 583 368 580 389Z" fill="#ba261a" stroke="#fff" strokeWidth="1.500" />
      <circle cx="580" cy="340" r="8" fill="#fff" />

      {/* zoom and full-screen controls */}
      <g filter="url(#shade)">
        <path d="M47.500 98.500A41 41 0 1 1 72.500 98.500V101.500A33 33 0 1 1 47.500 101.500Z" fill="#efefef" stroke="#fff" strokeWidth="2" />
        <circle cx="1100" cy="60" r="41" fill="#efefef" stroke="#fff" strokeWidth="2" />
      </g>
      <g fill="url(#knob)" stroke="#e2e2e2">
        <circle cx="60" cy="60" r="30" />
        <circle cx="60" cy="132" r="22.500" />
        <circle cx="1100" cy="60" r="30" />
      </g>
      <path d="M46 61.500H74M60 47.500V75M50 133.500H70" stroke="#fff" strokeWidth="4" />
      <path d="M46 60H74M60 46V74M50 132H70" stroke="#7a7a7a" strokeWidth="4" />
      <path d="M1088 57V50H1096M1104 50H1112V57M1088 66V73.500H1096M1104 73.500H1112V66" transform="translate(0 -1.500)" fill="none" stroke="#4a4a4a" strokeWidth="4" />

      {/* attribution */}
      <g fill="#333" stroke="none" fontFamily="'Liberation Sans', Arial, sans-serif" fontSize="18">
        <text x="830" y="755.5" textLength="189" lengthAdjust="spacingAndGlyphs">Работает на API 2ГИС</text>
        <text x="791" y="775.5" textLength="228" lengthAdjust="spacingAndGlyphs">Лицензионное соглашение</text>
        <path d="M830 759H1020M791 779H1020" stroke="#888" strokeWidth="1.500" />
      </g>
      <circle cx="1054" cy="764" r="24" fill="#a4c23f" />
      <text x="1051" y="780" fontFamily="'Liberation Sans', Arial, sans-serif" fontSize="48" fontWeight="700" fill="#e9eecb" fillOpacity="0.75" textLength="29" lengthAdjust="spacingAndGlyphs">2</text>
      <text x="1083" y="780.5" fontFamily="'Liberation Sans', Arial, sans-serif" fontSize="45" fontWeight="700" fill="#454b50" textLength="58" lengthAdjust="spacingAndGlyphs">GIS</text>
    </svg>
  );
}

/* ------------------------------------------------------------------ */
/* Header                                                               */
/* ------------------------------------------------------------------ */

function Logo() {
  return (
    <svg className="h-[92px] w-[415px] shrink-0" viewBox="75 0 415 92" fontFamily="'Liberation Sans', Arial, sans-serif">
      <g transform="translate(70 0) scale(0.33333)">
        <circle cx="146" cy="134" r="108.500" fill="none" stroke="#19202e" strokeWidth="44" />
        <circle cx="146" cy="134" r="81" fill="none" stroke="#19202e" strokeWidth="4" />
        <path d="M222 98L280 88L330 120L300 270H240L215 235Z" fill="#fff" />
        <path d="M306 116C262 116 258 150 236 186C222 208 200 218 192 238C176 252 160 260 146 262L150 240C190 230 215 200 228 165C240 140 265 112 306 116Z" fill="#19202e" />
        <path d="M192 216L236 176L250 196L226 236L180 256Z" fill="#19202e" />
        <path d="M148 262C200 262 236 226 254 180C264 150 280 128 308 118C286 138 282 162 270 190C252 238 206 274 148 266Z" fill="#d34247" stroke="#fff" strokeWidth="2" />
        <path d="M72 150L95 155L82 140L105 143Q100 134 118 132L112 142L124 149Q150 160 186 152C206 138 212 104 258 94C284 92 300 106 306 113C262 112 250 134 234 152C220 166 200 170 190 170Q206 176 202 190Q188 176 160 176L120 172L82 172L104 164Q78 162 72 150Z" fill="#d34247" />
      </g>
      <text x="169.500" y="71.500" fontFamily="Roboto, 'Liberation Sans', sans-serif" fontSize="45.500" fontWeight="900" fontStyle="italic" fill="#d34247" stroke="#d34247" strokeWidth="1.600" textLength="314" lengthAdjust="spacingAndGlyphs">ШИНСЕРВИС</text>
      <text x="167" y="87.300" fontSize="14.600" fontWeight="700" fontStyle="italic" fill="#19202e" textLength="313">АВТОСЕРВИСНЫЕ ЦЕНТРЫ</text>
    </svg>
  );
}

const nav = [
  { label: "Шины", cls: "w-[171px]" },
  { label: "Диски", cls: "w-[171px]" },
  { label: "Шиномонтаж", cls: "w-[275px]" },
  { label: "Хранение", cls: "w-[224px]" },
];

function Header() {
  return (
    <header>
      <div className="flex h-[115px] items-start pl-[75px]">
        <Logo />
        <div className="ml-[774px] mt-[32px] w-[1048px] shrink-0 text-[32px] font-bold leading-[40px] text-[#333]">+7 (495) 162-53-45</div>
        <div className="mt-[26px] shrink-0 whitespace-nowrap text-[28px] leading-[40px]">Ст</div>
      </div>
      <nav className="flex h-[72px] pl-[75px] text-[30px] font-bold leading-[60px]">
        {nav.map((n) => (
          <a key={n.label} className={n.cls}>{n.label}</a>
        ))}
        <a className="h-full border-b-8 border-[#ba261a]">Автосервис</a>
      </nav>
      <div className="flex">
        <div className="h-[2px] w-[75px] bg-white" />
        <div className="h-[2px] flex-1 bg-[#eee]" />
      </div>
      <div className="h-[104px] bg-[#eee] pl-[75px] pt-[22px]">
        <div className="flex h-[60px] w-[930px] overflow-hidden rounded-lg border-2 border-[#a5a5ab] text-center text-[28px] leading-[57px]">
          <div className="w-[312px] border-r-2 border-[#a5a5ab] bg-[#eee] font-bold">Запись на сервис</div>
          <div className="w-[244px] border-r-2 border-[#a5a5ab] bg-white">Каталог услуг</div>
          <div className="flex-1 bg-white">Автосервисные центры</div>
        </div>
      </div>
    </header>
  );
}

/* ------------------------------------------------------------------ */
/* Booking details                                                      */
/* ------------------------------------------------------------------ */

const iconGrey = "#a5a5ad";

function CalendarIcon() {
  return (
    <svg className="mt-[3px] h-8 w-8" viewBox="0 0 32 32">
      <path fill={iconGrey} d="M4 0H6V4H10V0H22V4H26V0H28Q32 1 32 5V8H0V5Q0 1 4 0ZM0 10.500H32V27Q32 32 27 32H5Q0 32 0 27Z" />
      <path fill="#fff" d="M6 14.500h5v4H6zM14 14.500h5v4h-5zM21.500 14.500h5v4h-5zM6 22.500h5v4H6zM14 22.500h5v4h-5zM21.500 22.500h5v4h-5z" />
    </svg>
  );
}

function Details() {
  return (
    <section className="w-[661px] shrink-0 leading-[30px]">
      <h2 className="mt-[2px] font-bold">Услуга</h2>
      <p className="mt-[22px]">Шиномонтаж</p>
      <h2 className="mt-[52px] font-bold">Дата и время обслуживания</h2>
      <div className="mt-[23px] flex">
        <div className="flex w-[52px] pl-[5px]"><CalendarIcon /></div>
        <p className="mt-[5px]">Понедельник, 16 ноября в 16:00</p>
      </div>
      <h2 className="mt-[66px] font-bold">Адрес автосервисного центра</h2>
      <div className="mt-[22px] flex">
        <div className="w-[52px] pl-[9px]">
          <svg className="h-8 w-6" viewBox="0 0 24 32">
            <path fill={iconGrey} fillRule="evenodd" d="M12 0A12 12 0 0 1 24 12C24 18 17 23 12 32C7 23 0 18 0 12A12 12 0 0 1 12 0ZM12 6A6 6 0 1 0 12 18A6 6 0 1 0 12 6Z" />
          </svg>
        </div>
        <p>Москва, СЗАО, ул. Генерала<br />Белобородова, вл.40 к.2</p>
      </div>
      <div className="mt-[10px] flex h-[35px]">
        <div className="w-[52px] pl-[7px]">
          <svg className="h-7 w-7" viewBox="0 0 28 28">
            <circle cx="14" cy="14" r="14" fill={iconGrey} />
            <path d="M14 6V15L19.500 20.500" fill="none" stroke="#fff" strokeWidth="3.600" />
          </svg>
        </div>
        <p className="mt-[6px]">Пн-Вс 9-21</p>
      </div>
      <div className="mt-[15px] flex h-[35px]">
        <div className="w-[52px] pl-[7px]">
          <svg className="h-7 w-7" viewBox="0 0 28 28">
            <path fill={iconGrey} d="M5 0Q7 0 8 2L11 6Q11.500 8 9 10Q11 16 17 19L19.500 17Q21 16 23 18L27 21Q29 23 26 25Q24 28 20 28Q12 27 6 19Q0 11 0 5Q1 1 5 0Z" />
          </svg>
        </div>
        <p className="mt-[6px]">+7 (495) 162-53-45; 8 800 333-83-88</p>
      </div>
      <button className="mt-[64px] block h-[80px] w-[330px] rounded-lg bg-[#ba261a] ml-px text-[28px] font-bold leading-[80px] text-white">Как проехать</button>
    </section>
  );
}

export default function App() {
  return (
    <div className="h-[1418px] w-[2341px] overflow-hidden bg-white font-['Liberation_Sans',Arial,sans-serif] text-black">
      <Header />
      <main className="pl-[58px] text-[28px] text-[#333]">
        <div className="mt-[67px] flex items-center leading-[40px]">
          <span>Москва и область</span>
          <svg className="mx-[19px] mt-px h-[18px] w-[9px]" viewBox="0 0 9 18"><path d="M1 1L7.500 9L1 17" fill="none" stroke="#888" strokeWidth="1.800" /></svg>
          <span>Запись на сервис</span>
        </div>
        <h1 className="mt-[17px] text-[48px] font-bold leading-[60px]">Вы записаны на сервис. Ваша запись – №236251!</h1>
        <div className="mt-[40px] flex">
          <Details />
          <ServiceMap />
        </div>
      </main>
      <div className="flex h-[101px] bg-linear-to-b from-white from-30% to-[#f8f8f8] pl-[63px] text-[28px] leading-[34px] text-[#333]">
        <svg className="mt-[34px] h-8 w-8" viewBox="0 0 32 32">
          <circle cx="16" cy="16" r="16" fill="#5cb557" />
          <circle cx="16" cy="8.500" r="2.400" fill="#fff" />
          <path d="M12.500 12.500H18V26H14.500V15H12.500Z" fill="#fff" />
        </svg>
        <p className="ml-[15px] mt-[30px] whitespace-nowrap">
          Если вы по каким-то причинам не успеваете подъехать вовремя, либо хотите отменить запись, пожалуйста, сообщите нам об этом<br />
          по телефону. Пожалуйста, приезжайте заранее, чтобы ко времени записи ваш автомобиль был готов к оказанию услуг.
        </p>
      </div>
    </div>
  );
}
